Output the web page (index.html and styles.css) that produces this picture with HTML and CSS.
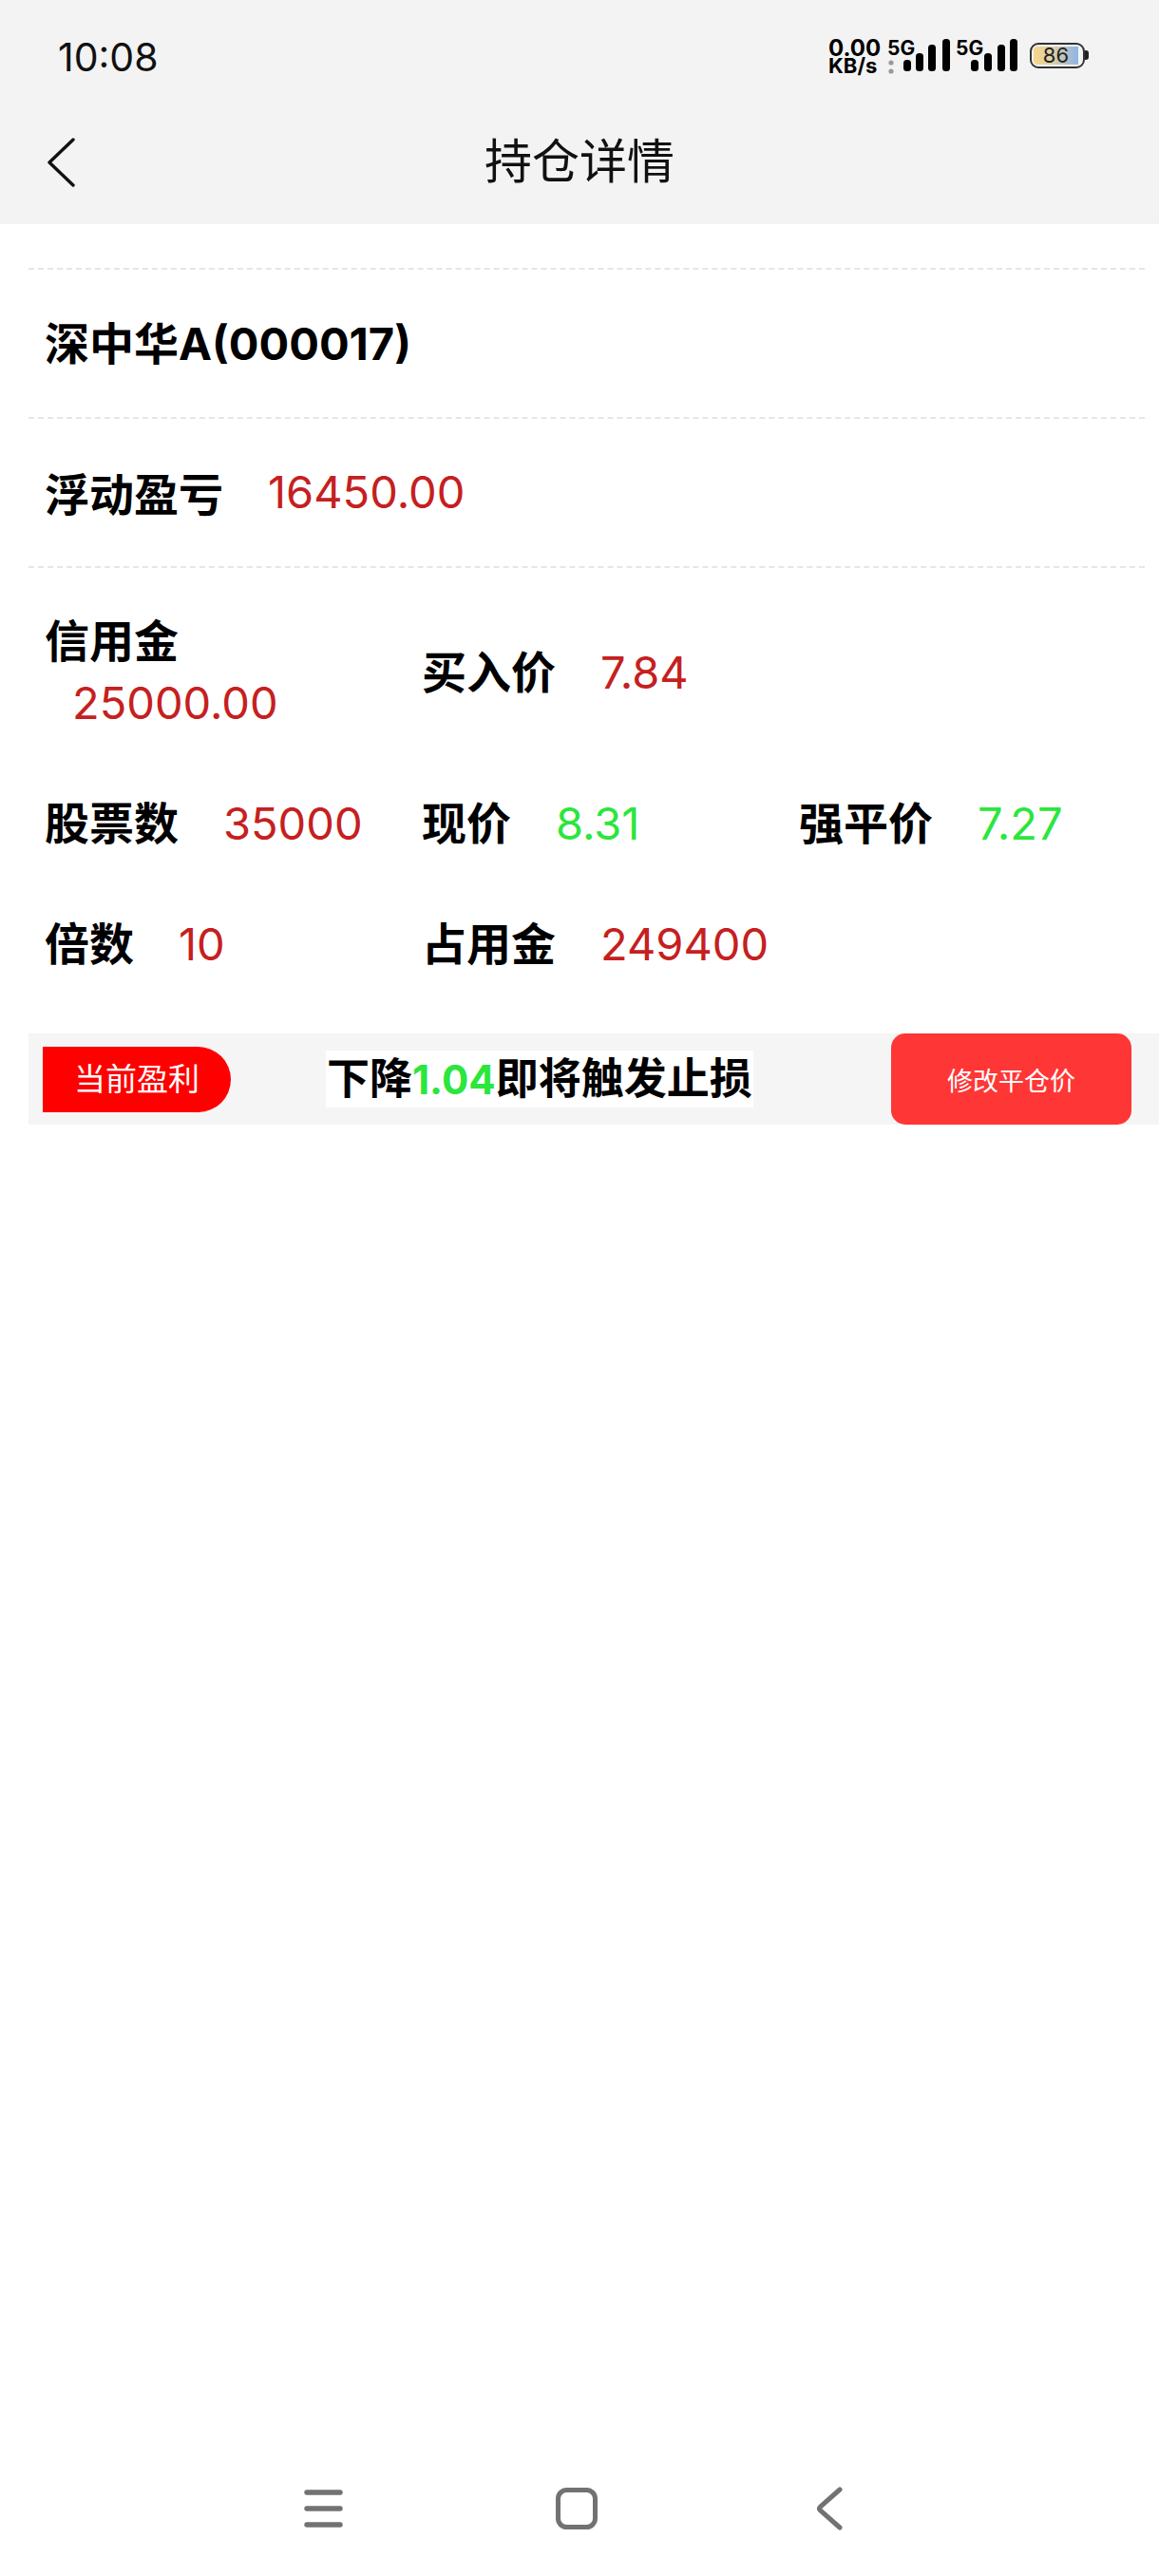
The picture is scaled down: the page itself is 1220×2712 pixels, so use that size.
FILE: index.html
```html
<!DOCTYPE html>
<html lang="zh-CN">
<head>
    <meta charset="UTF-8">
    <meta name="viewport" content="width=device-width, initial-scale=1.0">
    <title>持仓详情</title>
    <link rel="stylesheet" href="styles.css">
</head>
<body>
    <header class="top">
        <div class="status-bar">
            <span class="time">10:08</span>
            <div class="status-icons">
                <div class="speed"><span>0.00</span><span class="speed-unit">KB/s</span></div>
                <div class="sim sim-first">
                    <span class="net">5G</span>
                    <svg class="dots" width="8" height="16" viewBox="0 0 8 16"><circle cx="4" cy="3" r="2.6"/><circle cx="4" cy="12" r="2.6"/></svg>
                    <svg class="bars" width="50" height="36" viewBox="0 0 50 36"><rect x="0" y="22" width="8" height="12" rx="3.5"/><rect x="13" y="15" width="8" height="19" rx="3.5"/><rect x="26" y="6" width="8" height="28" rx="3.5"/><rect x="41" y="0" width="8" height="34" rx="3.5"/></svg>
                </div>
                <div class="sim">
                    <span class="net">5G</span>
                    <svg class="bars" width="50" height="36" viewBox="0 0 50 36"><rect x="0" y="22" width="8" height="12" rx="3.5"/><rect x="14" y="15" width="8" height="19" rx="3.5"/><rect x="28" y="6" width="8" height="28" rx="3.5"/><rect x="41" y="0" width="8" height="34" rx="3.5"/></svg>
                </div>
                <div class="battery"><div class="battery-body"><div class="battery-fill">86</div></div><div class="battery-nub"></div></div>
            </div>
        </div>
        <div class="title-bar">
            <svg class="back" width="30" height="52" viewBox="0 0 30 52"><path d="M28 2 L3 26 L28 50" fill="none" stroke="#111" stroke-width="3.4" stroke-linecap="round" stroke-linejoin="round"/></svg>
            <h1>持仓详情</h1>
        </div>
    </header>

    <main class="content">
        <div class="row name">深中华A(000017)</div>
        <div class="row"><span class="label">浮动盈亏</span> <span class="val red">16450.00</span></div>

        <div class="grid">
            <div class="cell"><span class="label">信用金</span> <span class="val red">25000.00</span></div>
            <div class="cell"><span class="label">买入价</span> <span class="val red">7.84</span></div>
            <div class="cell"></div>
            <div class="cell"><span class="label">股票数</span> <span class="val red">35000</span></div>
            <div class="cell"><span class="label">现价</span> <span class="val green">8.31</span></div>
            <div class="cell"><span class="label">强平价</span> <span class="val green">7.27</span></div>
            <div class="cell"><span class="label">倍数</span> <span class="val red">10</span></div>
            <div class="cell"><span class="label">占用金</span> <span class="val red">249400</span></div>
        </div>

        <div class="action-bar">
            <span class="tag">当前盈利</span>
            <span class="notice">下降<b class="green">1.04</b>即将触发止损</span>
            <button class="edit-btn">修改平仓价</button>
        </div>
    </main>

    <nav class="nav-bar">
        <div class="nav-item">
            <svg width="44" height="44" viewBox="0 0 44 44"><path d="M4 6 H39 M4 23 H39 M4 40 H39" fill="none" stroke="#727272" stroke-width="5.4" stroke-linecap="round"/></svg>
        </div>
        <div class="nav-item">
            <svg width="46" height="46" viewBox="0 0 46 46"><rect x="3.5" y="3.5" width="39" height="39" rx="9" fill="none" stroke="#727272" stroke-width="5"/></svg>
        </div>
        <div class="nav-item">
            <svg width="30" height="46" viewBox="0 0 30 46"><path d="M26 3 L5.5 21 Q3.5 23 5.5 25 L26 43" fill="none" stroke="#727272" stroke-width="5" stroke-linecap="round"/></svg>
        </div>
    </nav>
</body>
</html>
```

FILE: styles.css
```css
* { box-sizing: border-box; }
html, body { margin: 0; padding: 0; }
body { width: 1220px; height: 2712px; background-color: #fff; color: #000; font-family: Inter, "Noto Sans CJK SC", sans-serif; display: flex; flex-direction: column; overflow: hidden; }

.top { height: 236px; background-color: #f3f3f3; flex-shrink: 0; }
.status-bar { height: 118px; display: flex; justify-content: space-between; align-items: center; padding: 0 0 0 61px; }
.time { font-size: 41px; line-height: 1; color: #111; margin-top: 2px; }
.status-icons { display: flex; align-items: flex-start; height: 36px; margin-right: 74px; }
.speed { display: flex; flex-direction: column; width: 62px; font-size: 24px; font-weight: 700; line-height: 19px; }
.speed-unit { font-size: 22px; }
.sim { position: relative; height: 36px; width: 78px; }
.sim-first { width: 72px; }
.net { position: absolute; left: 0; top: 0; font-size: 21px; font-weight: 700; line-height: 20px; }
.dots { position: absolute; left: 0; top: 22px; fill: #999; }
.bars { position: absolute; left: 16px; top: 0; fill: #000; }
.sim-first .bars { left: 17px; }
.battery { display: flex; align-items: center; height: 28px; margin-top: 3px; }
.battery-body { width: 58px; height: 27px; border: 2.5px solid #333; border-radius: 9px; padding: 2px; }
.battery-fill { width: 47px; height: 100%; border-radius: 4px 0 0 4px; background: linear-gradient(90deg, #f6d68a, #d9cfa8 45%, #8db4e8); color: #222; font-size: 22px; line-height: 18px; text-align: center; }
.battery-nub { width: 4px; height: 10px; background-color: #222; border-radius: 0 3px 3px 0; }

.title-bar { position: relative; height: 118px; display: flex; align-items: center; justify-content: center; padding-bottom: 15px; }
.back { position: absolute; left: 49px; top: 27px; }
h1 { margin: 0; font-size: 50px; font-weight: 400; line-height: 1; color: #111; }

.content { margin-top: 46px; margin-left: 30px; }
.row { height: 157px; margin-right: 15px; padding-left: 17px; padding-bottom: 3px; display: flex; gap: 47px; align-items: center; border-top: 2px dashed #e3e6ea; }
.name { font-weight: 700; font-size: 47px; padding-bottom: 6px; }
.label { font-size: 47px; font-weight: 700; }
.val { font-size: 47px; font-weight: 400; }
.row .val { margin-top: 1px; }
.red { color: #c52020; }
.green { color: #2be63c; }

.grid { display: grid; grid-template-columns: repeat(3, 397px); border-top: 2px dashed #e3e6ea; margin-right: 15px; padding-top: 13px; }
.cell { display: flex; flex-wrap: wrap; align-items: center; padding: 31px 0 31px 17px; line-height: 65px; }
.cell .val { margin-left: 47px; }
.cell:first-child .val { margin-left: 29px; }

.action-bar { height: 96px; margin-top: 31px; background-color: #f5f5f5; display: flex; align-items: center; padding: 0 29px 0 15px; }
.tag { width: 198px; height: 69px; background-color: #f00; color: #fff; font-size: 33px; line-height: 69px; text-align: center; border-radius: 0 35px 35px 0; }
.notice { margin-left: 100px; height: 60px; padding: 0 1px; background-color: #fff; font-size: 45px; font-weight: 700; line-height: 60px; }
.notice b { font-size: 42px; font-weight: 700; }
.edit-btn { margin-left: auto; width: 253px; height: 96px; background-color: #ff3636; color: #fff; border: none; border-radius: 15px; font-family: inherit; font-size: 27px; padding: 0; }

.nav-bar { margin-top: auto; height: 112px; display: flex; justify-content: center; padding-right: 7px; padding-top: 18px; }
.nav-item { width: 266px; display: flex; justify-content: center; align-items: flex-start; }
```
